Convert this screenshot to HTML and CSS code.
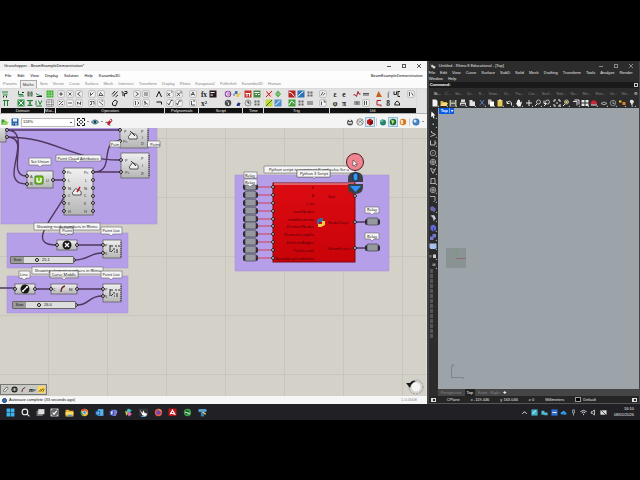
FILE: index.html
```html
<!DOCTYPE html>
<html lang="en">
<head>
<meta charset="utf-8">
<title>Grasshopper and Rhino desktop</title>
<link rel="stylesheet" href="styles.css">
</head>
<body>
<main class="desktop">
  <section class="gh">
    <header class="gh-title">
      <span>Grasshopper - BeamExampleDemonstration*</span>
      <div class="win-buttons">
        <button aria-label="Minimise"><svg viewBox="0 0 8 8"><path d="M2 4.5h4"/></svg></button>
        <button aria-label="Maximise"><svg viewBox="0 0 8 8"><rect x="2.5" y="2.5" width="3" height="3"/></svg></button>
        <button aria-label="Close"><svg viewBox="0 0 8 8"><path d="M2 2l4 4M6 2l-4 4"/></svg></button>
      </div>
    </header>
    <nav class="gh-menu">
      <button>File</button><button>Edit</button><button>View</button><button>Display</button><button>Solution</button><button>Help</button><button>Karamba3D</button>
      <span class="doc-name">BeamExampleDemonstration</span>
    </nav>
    <nav class="gh-tabs">
      <button>Params</button><button class="active">Maths</button><button>Sets</button><button>Vector</button><button>Curve</button><button>Surface</button><button>Mesh</button><button>Intersect</button><button>Transform</button><button>Display</button><button>Rhino</button><button>Kangaroo2</button><button>Pufferfish</button><button>Karamba3D</button><button>Human</button>
    </nav>
    <div class="ribbon" id="ribbon"></div>
    <div class="canvas-bar">
      <button aria-label="Open"><svg viewBox="0 0 16 16"><path fill="#3f9a2c" d="M1 3h5l2 2h4v3H5l-3 6H1z"/><path fill="#8ed45b" d="M5 8h10l-3 6H2z"/><path fill="#d9f0c8" d="M7 2h5v5H7z"/></svg></button>
      <button aria-label="Save"><svg viewBox="0 0 16 16"><path fill="#2a65ab" d="M1 1h14v14H1z"/><path fill="#e6eef8" d="M4 2h8v5H4z"/><path fill="#83b2e4" d="M4 10h8v5H4z"/><path fill="#173d70" d="M5 11h3v4H5z"/></svg></button>
      <select aria-label="Zoom level" class="zoom"><option>118%</option></select>
      <button aria-label="Zoom extents"><svg viewBox="0 0 16 16"><path fill="none" stroke="#111" stroke-width="2" d="M1 6V1h5M10 1h5v5M15 10v5h-5M6 15H1v-5"/><path d="M8 3l2 3H6zM8 13l2-3H6zM3 8l3-2v4zM13 8l-3-2v4z"/></svg></button>
      <i class="caret"></i>
      <button aria-label="Preview"><svg viewBox="0 0 16 16"><path fill="#e9f4f8" stroke="#33586c" stroke-width="2" d="M1 8q7-8 14 0q-7 8-14 0z"/><circle cx="8" cy="8" r="3.5" fill="#1f6d86"/><circle cx="8" cy="8" r="1.5"/></svg></button>
      <i class="caret"></i>
      <button aria-label="Sketch"><svg viewBox="0 0 16 16"><path d="M1 9q4-3 5 2t5 3" fill="none" stroke="#555" stroke-width="2"/><path fill="#bb1b22" d="M5 9l7-8 3 4-6 8-4 1z"/><path fill="#fff" d="M11 3l2 2-2 2-2-2z"/></svg></button>
      <span class="spacer"></span>
      <button aria-label="No preview"><svg viewBox="0 0 16 16"><circle cx="8" cy="9" r="6" fill="#555"/><path fill="#ddd" d="M4 8h8v3H4zM6 2h4v4H6z"/></svg></button>
      <button aria-label="Wireframe preview"><svg viewBox="0 0 16 16" fill="none" stroke="#666" stroke-width="1.4"><circle cx="8" cy="8" r="6.5"/><path d="M3 12L13 3M2 7q6-4 11 5"/></svg></button>
      <button aria-label="Shaded preview" class="pressed"><svg viewBox="0 0 16 16"><path fill="#c01818" d="M2 5l6-4 6 4v6l-6 4-6-4z"/><path fill="#760c0c" d="M8 8l6-3v6l-6 4z"/></svg></button>
      <i class="sep"></i>
      <button aria-label="Document preview"><svg viewBox="0 0 16 16"><circle cx="8" cy="9" r="6" fill="#23836e"/><path fill="#65b8a5" d="M2 5l5-3 2 5-5 2z"/></svg></button>
      <button aria-label="Selected preview" class="pressed"><svg viewBox="0 0 16 16"><circle cx="8" cy="8" r="6.5" fill="#246b29"/><path fill="#b4e389" d="M4 3l7 3-4 7z"/></svg></button>
      <button aria-label="Preview quality"><svg viewBox="0 0 16 16"><circle cx="8" cy="8" r="6.5" fill="#d77a24"/><path fill="#f9ddc0" d="M3 4h5v8H4z"/></svg></button>
      <i class="sep"></i>
      <button aria-label="Mesh settings"><svg viewBox="0 0 16 16"><circle cx="8" cy="8" r="6.5" fill="#4485cc" stroke="#285581"/><circle cx="6" cy="6" r="3" fill="#d6ebff"/></svg></button>
      <i class="caret"></i>
    </div>

    <div class="canvas">
      <svg class="graph" role="img" aria-label="Definition graph">
        <defs>
          <pattern id="grid" width="59" height="59" patternUnits="userSpaceOnUse" x="48" y="10"><path class="grid-line" d="M.5 0V59M0 .5H59"/></pattern>
          <linearGradient id="face" x2="0" y2="1"><stop stop-color="#f1f1f1"/><stop offset="1" stop-color="#b5b5b5"/></linearGradient>
          <linearGradient id="redface" x2="0" y2="1"><stop stop-color="#dc0b12"/><stop offset="1" stop-color="#c90308"/></linearGradient>
          <g id="relay"><rect x="-7" y="-3" width="15" height="6" rx="2" class="cap"/><rect x="-5" y="-4" width="11" height="7" rx="1" fill="#9697a0" stroke="#44454d" stroke-width=".7"/></g>
          <g id="cloud"><path d="M-4 3q-2-3 1-4q1-4 4-1q4 0 3 5z" fill="#eee" stroke="#333" stroke-width=".8"/></g>
          <g id="list" fill="none" stroke="#333" stroke-width="1"><path d="M-4-4v7M-4-3h3M1-3h2M-3 3l2-2M0 3h1M3 0v4M-1 0h2M5-4v2"/></g>
        </defs>
        <rect width="100%" height="100%" fill="#d4d1c9"/>
        <rect width="100%" height="100%" fill="url(#grid)"/>
        <g transform="translate(0 -128)">
          <g class="group"><path d="M1 128H157V224H1z"/><path d="M7 233H128V268H7z"/><path d="M7 276H128V313H7z"/><path d="M235 175H389V271H235z"/></g>

          <g class="wire">
            <path d="M7 130H120M7 137C55 137 70 160 120 160M7 130C32 130 5 176 26 176M7 137C35 137 -4 184 26 184"/>
            <path d="M54 180H64M94 172C116 172 98 141 120 141M94 172H120M64 197C56 214 25 245 56 245"/>
            <path d="M78 245H102M74 260C88 260 90 253 102 253"/>
            <path d="M0 288H14M36 289H50M78 289H102M77 305C90 305 88 296 102 296"/>
            <path d="M356 222H366M356 248H366"/>
          </g>
          <path class="wire-red" d="M257 187H272M257 195H272M257 203H272M257 211H272M257 219H272M257 226H272M257 234H272M257 242H272M257 250H272M257 258H272"/>

          <g class="node">
            <rect x="-4" y="120" width="10" height="22"/>
            <rect x="120" y="120" width="28" height="28"/>
            <rect x="121" y="153" width="28" height="25"/>
            <rect x="27" y="171" width="26" height="17"/>
            <rect x="64" y="168" width="29" height="47"/>
            <rect x="57" y="240" width="20" height="10"/>
            <rect x="103" y="240" width="18" height="18"/>
            <rect x="15" y="284" width="20" height="10"/>
            <rect x="51" y="284" width="26" height="10"/>
            <rect x="103" y="284" width="18" height="18"/>
          </g>
          <g class="jag"><path d="M148 130V147M149 155V177M121 242V257M121 286V301"/></g>
          <rect x="273" y="183" width="82" height="79" fill="url(#redface)" stroke="#7e0a10"/>
          <path d="M274 184H354" stroke="#f2b7b7"/>

          <g class="port">
            <circle cx="7" cy="130" r="1.4"/><circle cx="7" cy="137" r="1.4"/>
            <circle cx="120" cy="130" r="1.4"/><circle cx="120" cy="141" r="1.4"/><circle cx="121" cy="160" r="1.4"/><circle cx="121" cy="172" r="1.4"/>
            <circle cx="27" cy="176" r="1.4"/><circle cx="27" cy="184" r="1.4"/><circle cx="53" cy="180" r="1.4"/>
            <circle cx="64" cy="172" r="1.4"/><circle cx="64" cy="180" r="1.4"/><circle cx="64" cy="188" r="1.4"/><circle cx="64" cy="196" r="1.4"/><circle cx="64" cy="203" r="1.4"/><circle cx="64" cy="211" r="1.4"/>
            <circle cx="93" cy="172" r="1.4"/><circle cx="93" cy="180" r="1.4"/><circle cx="93" cy="188" r="1.4"/><circle cx="93" cy="196" r="1.4"/><circle cx="93" cy="203" r="1.4"/><circle cx="93" cy="211" r="1.4"/>
            <circle cx="57" cy="245" r="1.4"/><circle cx="77" cy="245" r="1.4"/><circle cx="103" cy="245" r="1.4"/><circle cx="103" cy="253" r="1.4"/>
            <circle cx="15" cy="289" r="1.4"/><circle cx="35" cy="289" r="1.4"/><circle cx="51" cy="289" r="1.4"/><circle cx="77" cy="289" r="1.4"/><circle cx="103" cy="289" r="1.4"/><circle cx="103" cy="296" r="1.4"/>
            <circle cx="74" cy="260" r="1.4"/><circle cx="76" cy="305" r="1.4"/>
            <circle cx="273" cy="187" r="1.4"/><circle cx="273" cy="195" r="1.4"/><circle cx="273" cy="203" r="1.4"/><circle cx="273" cy="211" r="1.4"/><circle cx="273" cy="219" r="1.4"/><circle cx="273" cy="226" r="1.4"/><circle cx="273" cy="234" r="1.4"/><circle cx="273" cy="242" r="1.4"/><circle cx="273" cy="250" r="1.4"/><circle cx="273" cy="258" r="1.4"/>
            <circle cx="355" cy="196" r="1.4"/><circle cx="355" cy="222" r="1.4"/><circle cx="355" cy="248" r="1.4"/>
          </g>
          <use href="#relay" x="250" y="187"/><use href="#relay" x="250" y="195"/><use href="#relay" x="250" y="203"/><use href="#relay" x="250" y="211"/><use href="#relay" x="250" y="219"/><use href="#relay" x="250" y="226"/><use href="#relay" x="250" y="234"/><use href="#relay" x="250" y="242"/><use href="#relay" x="250" y="250"/><use href="#relay" x="250" y="258"/>
          <use href="#relay" x="372" y="222"/><use href="#relay" x="372" y="248"/>

          <use href="#cloud" x="133" y="136"/><use href="#cloud" x="134" y="166"/>
          <path d="M130 131l5 5M131 161l5 5" stroke="#333"/>
          <use href="#cloud" x="77" y="192"/><path d="M77 192l3-5" stroke="#b71e28" stroke-width="1.5"/>
          <rect x="35" y="176" width="8" height="8" rx="1" fill="#7ccb25" stroke="#3c7a10"/><path d="M37 178v2q0 2 2 2t2-2v-2" fill="none" stroke="#fff" stroke-width="1.4"/>
          <circle cx="67" cy="245" r="4.5" fill="#171717"/><path d="M65 243l4 4M69 243l-4 4" stroke="#fff" stroke-width="1.3"/>
          <circle cx="25" cy="289" r="4.5" fill="#171717"/><path d="M23 291l4-4" stroke="#fff" stroke-width="1.3"/><circle cx="23" cy="291" r="1" fill="#fff"/><circle cx="27" cy="287" r="1" fill="#fff"/>
          <path d="M61 292q0-5 4-6" fill="none" stroke="#6d1d33" stroke-width="1.3"/>
          <use href="#list" x="114" y="249"/><use href="#list" x="114" y="293"/>

          <g class="io">
            <text x="124" y="133">P</text><text x="123" y="143">Pc</text><text x="141" y="133">P</text><text x="142" y="139">I</text><text x="141" y="145">D</text>
            <text x="125" y="162">P</text><text x="125" y="174">Pc</text><text x="141" y="160">P</text><text x="142" y="167">I</text><text x="141" y="175">D</text>
            <text x="30" y="178">A</text><text x="30" y="185">B</text><text x="46" y="182">U</text>
            <text x="67" y="174">Pc</text><text x="68" y="182">L</text><text x="68" y="190">N</text><text x="68" y="197">C</text><text x="68" y="205">E</text><text x="68" y="213">H</text>
            <text x="84" y="174">Pc</text><text x="85" y="182">L</text><text x="84" y="190">N</text><text x="84" y="197">C</text><text x="84" y="205">E</text><text x="84" y="213">H</text>
            <text x="105" y="247">P</text><text x="105" y="255">S</text><text x="105" y="291">P</text><text x="105" y="298">S</text>
            <text x="53" y="291">C</text><text x="69" y="291">M</text>
          </g>
          <g class="io red end">
            <text x="314" y="189">E</text><text x="314" y="197">A</text><text x="314" y="205">I_xx</text><text x="314" y="213">numNodes</text><text x="314" y="221">numElements</text><text x="314" y="228">ElementNodes</text><text x="314" y="236">ElementLengths</text><text x="314" y="244">ElementAngles</text><text x="314" y="252">PointLoads</text><text x="314" y="260">BoundaryConditions</text>
          </g>
          <g class="io red"><text x="328" y="198">Out</text><text x="328" y="224">NodeDisps</text><text x="328" y="250">BeamForces</text></g>
          <path fill="#2e6ca8" d="M320 218h3v4h-4v2h-2v-4z"/><path fill="#f4cd45" d="M321 227h-3v-3h4v-3h3v4z"/>

          <g class="tag">
            <path d="M120 141H110V147H120M148 141H160V147H148"/><path d="M29 158H51V165H42L40 167L38 165H29z"/><path d="M56 155H101V161H80L78 163L76 161H56z"/>
            <path d="M34 223H100V230H34z"/><path d="M60 227H73V234H68L66 236L64 234H60z"/><path d="M101 227H122V234H113L111 236L109 234H101z"/>
            <path d="M32 267H103V274H32z"/><path d="M19 271H30V278H26L24 280L22 278H19z"/><path d="M50 271H78V278H66L64 280L62 278H50z"/><path d="M101 271H122V278H113L111 280L109 278H101z"/>
            <path d="M264 166H355V173H264z"/><path d="M297 170H330V177H316L314 179L312 177H297z"/>
            <path d="M244 172H257V178H244z"/><path d="M244 179H257V185H252L250 187L248 185H244z"/>
            <path d="M365 207H379V213H374L372 215L370 213H365z"/><path d="M365 233H379V239H374L372 241L370 239H365z"/>
          </g>
          <g class="caption">
            <text x="115" y="146">Poin</text><text x="155" y="146">Point</text><text x="40" y="163">Set Union</text><text x="78" y="160">Point Cloud Attributes</text>
            <text x="67" y="228">Showing node numbers in Rhino</text><text x="68" y="272">Showing element numbers in Rhino</text>
            <text x="309" y="171">Python script to construct K and solve for u</text>
          </g>
          <g class="tag"><path d="M60 228H73V234H60z"/><path d="M50 271H78V277H50z"/><path d="M297 170H330V177H297z"/></g>
          <g class="caption">
            <text x="67" y="232">Point</text><text x="111" y="232">Point List</text><text x="24" y="276">Line</text><text x="64" y="276">Curve Middle</text><text x="111" y="276">Point List</text>
            <text x="314" y="175">Python 3 Script</text><text x="250" y="177">Relay</text><text x="250" y="184">Relay</text><text x="372" y="211">Relay</text><text x="372" y="238">Relay</text>
          </g>

          <circle cx="355" cy="162" r="8.5" fill="#ef8590" stroke="#4b1d24"/>
          <path d="M353 160v6l1.5-1 1 2 1-1-1-2h2z" fill="#fff" stroke="#222" stroke-width=".5"/>
          <path d="M348 182V179Q348 172 355.5 172T363 179V182z" fill="#3c4148"/><path d="M348 184H363V187Q363 194 355.5 194T348 187z" fill="#3c4148"/>
          <rect x="353" y="173" width="5" height="8" rx="2" fill="#3096fa" stroke="#16283b"/><path d="M350 186H361L355.5 192z" fill="#2b93fb"/>
        </g>
      </svg>
      <svg class="compass" viewBox="0 0 22 18" aria-hidden="true"><circle cx="13" cy="10" r="7" fill="#d3d3cf" stroke="#999" stroke-dasharray="2 1"/><circle cx="13" cy="10" r="4.5" fill="#f4f4f2"/><path d="M3 6l4 5 1-3q2-3 5-4q-4-1-6 2z" fill="#181818"/></svg>
      <label class="slider first"><span>Size</span><input type="range" min="0" max="100" value="75"><output>25.1</output></label>
      <label class="slider second"><span>Size</span><input type="range" min="0" max="100" value="79"><output>26.0</output></label>
      <div class="markov">
        <button aria-label="Panel"><svg viewBox="0 0 16 16"><path d="M3 11L11 2l3 3-8 9z" fill="#fff" stroke="#333" stroke-width="1.5"/></svg></button>
        <button aria-label="Integer"><svg viewBox="0 0 16 16"><circle cx="8" cy="8" r="7" fill="#181818"/><path d="M5 5v6M8 4v8M11 5v6" stroke="#fff" stroke-width="1.5"/></svg></button>
        <button aria-label="Line"><svg viewBox="0 0 16 16"><path d="M4 14q0-8 8-11" fill="none" stroke="#5c1726" stroke-width="2"/></svg></button>
        <button aria-label="Area"><svg viewBox="0 0 16 16"><text x="0" y="13" font-size="12" font-weight="bold" font-style="italic">m²</text></svg></button>
        <button aria-label="Series" class="lit"><svg viewBox="0 0 16 16"><path d="M2 13l5-6M6 13l6-8M11 13l3-6" stroke="#6b5200" stroke-width="2"/></svg></button>
      </div>
    </div>
    <footer class="gh-status"><i class="info"></i><span>Autosave complete (33 seconds ago)</span><span class="version">1.0.0008</span></footer>
  </section>

  <section class="rhino">
    <header class="rh-title">
      <svg class="logo" viewBox="0 0 16 16"><path fill="#ddd" d="M1 2l4 5 2-3 3 4 5 1-2 5-4 1-1-3-4-1z"/></svg>
      <span>Untitled - Rhino 8 Educational - [Top]</span>
      <div class="win-buttons">
        <button aria-label="Minimise"><svg viewBox="0 0 8 8"><path d="M2 4.5h4"/></svg></button>
        <button aria-label="Maximise"><svg viewBox="0 0 8 8"><rect x="2.5" y="2.5" width="3" height="3"/></svg></button>
        <button aria-label="Close"><svg viewBox="0 0 8 8"><path d="M2 2l4 4M6 2l-4 4"/></svg></button>
      </div>
    </header>
    <nav class="rh-menu">
      <button>File</button><button>Edit</button><button>View</button><button>Curve</button><button>Surface</button><button>SubD</button><button>Solid</button><button>Mesh</button><button>Drafting</button><button>Transform</button><button>Tools</button><button>Analyze</button><button>Render</button><button>Window</button><button>Help</button>
    </nav>
    <label class="command"><span>Command:</span><input type="text"><i class="page"></i></label>
    <nav class="rh-tabs">
      <button class="active">St...</button><button>C...</button><button>Se...</button><button>Di...</button><button>S...</button><button>View...</button><button>Vi...</button><button>Tra...</button><button>Cur...</button><button>Surf...</button><button>Soli...</button><button>Su...</button><button>Me...</button><button>Ren...</button><button>Dr...</button><button>Ne...</button><button class="active" aria-label="Options">⚙</button>
    </nav>
    <div class="rh-tools" id="rhTools"></div>
    <div class="rh-body">
      <div class="rh-side"><div class="side-tools" id="sideTools"></div><div class="swatches" id="swatches"></div></div>
      <div class="view-col">
        <div class="viewport">
          <button class="view-name">Top <span>▾</span></button>
          <svg class="plane" viewBox="0 0 20 20" aria-hidden="true"><rect width="20" height="20" fill="#8a9394"/><path d="M10.5 0V10" stroke="#789a80"/><path d="M10 10.5H20" stroke="#946b70"/></svg>
          <svg class="axes" viewBox="0 0 18 18" aria-hidden="true"><path d="M3.5 4V15.5H14" fill="none" stroke="#7d848b"/><text x="4" y="4">y</text><text x="14" y="17">x</text></svg>
        </div>
        <nav class="view-tabs"><button>Perspective</button><button class="active">Top</button><button>Front</button><button>Right</button><button class="plus" aria-label="Add view">✚</button></nav>
      </div>
    </div>
    <footer class="rh-status"><i class="pane"></i><span>CPlane</span><span>x -119.446</span><span>y 163.046</span><span>z 0</span><span>Millimeters</span><span class="layer"><i></i>Default</span><i class="pane"></i></footer>
  </section>
</main>
<footer class="taskbar">
  <nav class="apps" id="apps"></nav>
  <div class="tray">
    <div class="tray-icons" id="tray"></div>
    <time>16:10<br>08/01/2026</time>
  </div>
</footer>
<script src="script.js"></script>
</body>
</html>
```
FILE: styles.css
```css
* { box-sizing: border-box; }
html, body { height: 100%; }
body {
  margin: 0;
  padding: 61px 0 60px;
  background: #000;
  display: flex;
  flex-direction: column;
  font: 4px/6px "Liberation Sans", Arial, sans-serif;
  color: #111;
  overflow: hidden;
}
button, input, select {
  margin: 0;
  padding: 0;
  border: 0;
  background: none;
  font: inherit;
  color: inherit;
  min-width: 0;
}
button { display: block; white-space: nowrap; }
svg { display: block; }

.desktop {
  flex: 1;
  min-height: 0;
  display: grid;
  grid-template-columns: 2fr 1fr;
}
.win-buttons { margin-left: auto; display: flex; gap: 7px; padding-right: 4px; }
.win-buttons svg { width: 8px; height: 8px; fill: none; stroke: currentColor; stroke-width: 1; }

/* Grasshopper */
.gh {
  display: flex;
  flex-direction: column;
  min-width: 0;
  min-height: 0;
  background: #f3f3f3;
}
.gh-title { height: 10px; display: flex; align-items: center; padding-left: 4px; }
.gh-title .win-buttons { color: #555; }
.gh-menu { height: 9px; display: flex; align-items: center; gap: 6px; padding: 0 4px 0 5px; background: #fdfdfd; }
.doc-name { margin-left: auto; }
.gh-tabs { height: 8px; display: flex; gap: 1px; align-items: stretch; padding-left: 1px; color: #858585; background: #fbfbfb; }
.gh-tabs button { padding: 0 2px; }
.gh-tabs .active { color: #333; border: 1px solid #aaa; border-bottom: 0; background: #eee; }
.ribbon {
  height: 26px;
  display: grid;
  grid-template-columns: 43fr 10fr 108fr 33fr 43fr 20fr 64fr 86fr 9fr;
  gap: 1px;
  padding: 1px;
  background: #dadada;
  border-bottom: 1px solid #b3b3b3;
}
.panel { display: flex; flex-direction: column; min-width: 0; }
.panel-icons { flex: 1; display: flex; justify-content: space-between; padding: 1px; background: #e2e2e2; }
.cluster { display: grid; grid-template-rows: 8px 8px; grid-auto-flow: column; gap: 1px; }
.panel-icons svg { width: 8px; height: 8px; }
.panel-name { height: 5px; background: #111; color: #eee; line-height: 5px; text-align: center; overflow: hidden; }
.canvas-bar {
  height: 14px;
  padding: 3px 3px 1px 1px;
  display: flex;
  align-items: center;
  gap: 2px;
  background: #f4f4f4;
}
.canvas-bar svg { width: 8px; height: 8px; }
.zoom {
  width: 54px;
  height: 9px;
  border: 1px solid #bbb;
  padding-left: 1px;
  appearance: none;
  background: #fff linear-gradient(#555, #555) no-repeat right 2px center / 2px 1px;
}
.caret { border: 1px solid transparent; border-top-color: #333; }
.spacer { flex: 1; }
.sep { width: 1px; height: 8px; background: #ccc; }
.pressed { outline: 1px solid #92bddd; background: #d5e7f5; }

.canvas { flex: 1; min-height: 0; position: relative; overflow: hidden; }
.graph { width: 100%; height: 100%; }
.grid-line { fill: none; stroke: #c8c5bd; }
.group { fill: #b59fe8; stroke: #a591d7; stroke-width: .5; }
.wire { fill: none; stroke: #51375f; stroke-width: 1.4; }
.wire-red { fill: none; stroke: #d73a56; stroke-width: 1; }
.node rect { fill: url(#face); stroke: #555; stroke-width: .7; }
.jag { stroke: #333; stroke-width: 1; stroke-dasharray: 1 1; }
.port { fill: #fff; stroke: #111; stroke-width: 1; }
.cap { fill: #25262c; }
.io, .caption { font-family: "Open Sans", "Noto Sans", sans-serif; font-size: 4px; fill: #222; }
.red { fill: #400206; }
.end { text-anchor: end; }
.tag { fill: #f6f6f6; stroke: #666; stroke-width: .6; }
.caption { text-anchor: middle; fill: #000; }
.compass { position: absolute; right: 2px; bottom: 1px; width: 22px; height: 18px; }
.slider {
  position: absolute;
  left: 10px;
  top: 128px;
  width: 64px;
  height: 8px;
  display: flex;
  align-items: center;
  border: 1px solid #666;
  border-radius: 1px;
  background: #dedede;
}
.slider.second { left: 12px; top: 173px; }
.slider span { width: 13px; text-align: center; background: #9b9b9b; }
.slider input { width: 18px; height: 6px; appearance: none; }
.slider input::-webkit-slider-thumb { appearance: none; width: 4px; height: 4px; border: 1px solid #111; border-radius: 50%; background: #fff; }
.markov { position: absolute; left: 0; bottom: 1px; display: flex; gap: 2px; padding: 1px; background: #c9c9c4; border: 1px solid #777; }
.markov svg { width: 7px; height: 7px; }
.lit { background: #ffd75b; }
.gh-status { height: 8px; display: flex; align-items: center; gap: 2px; padding: 0 10px 0 2px; background: #f6f6f6; }
.info { width: 5px; height: 5px; border-radius: 50%; background: #2878b8; border: 1px solid #14426b; }
.version { margin-left: auto; color: #888; }

/* Rhino */
.rhino {
  display: flex;
  flex-direction: column;
  min-width: 0;
  min-height: 0;
  background: #2c2c2c;
  color: #e4e4e4;
  border: solid #444;
  border-width: 0 1px 0 2px;
}
.rh-title { height: 9px; display: flex; align-items: center; gap: 3px; padding-left: 1px; }
.rh-title .win-buttons { color: #888; }
.logo { width: 6px; height: 6px; }
.rh-menu { display: flex; flex-wrap: wrap; column-gap: 5px; }
.command { height: 6px; display: flex; align-items: center; padding: 0 1px; background: #1a1a1a; color: #fff; font-weight: bold; }
.command input { flex: 1; height: 6px; outline: 0; }
.page { width: 4px; height: 4px; border: 1px solid #ccc; }
.rh-tabs { height: 9px; display: flex; justify-content: space-between; align-items: center; padding: 2px 1px 0 5px; color: #858585; }
.rh-tabs .active { color: #e6e6e6; }
.rh-tools { height: 11px; display: flex; justify-content: space-between; align-items: center; padding: 0 3px 0 2px; }
.rh-tools svg { width: 8px; height: 8px; }
.rh-body { flex: 1; min-height: 0; display: flex; }
.rh-side { width: 9px; padding-top: 3px; }
.side-tools { height: 158px; display: flex; flex-direction: column; justify-content: space-between; }
.side-tools svg { width: 8px; height: 8px; }
.swatches { display: grid; grid-template-columns: 3px; gap: 1px; padding: 0 1px; }
.swatches i { height: 4px; background: #555; }
.view-col { flex: 1; display: flex; flex-direction: column; min-width: 0; }
.viewport { flex: 1; position: relative; background: #9ca3a9; }
.view-name { background: #0a5ce6; color: #fff; margin-left: 1px; padding: 0 1px 0 2px; font-weight: bold; }
.view-name span { border-left: 1px solid #7aa9f5; padding-left: 1px; }
.plane { position: absolute; left: 8px; top: 140px; width: 20px; height: 20px; }
.axes { position: absolute; left: 10px; bottom: 9px; width: 18px; height: 18px; font-size: 4px; fill: #61676d; }
.view-tabs { height: 7px; display: flex; align-items: stretch; gap: 3px; padding-left: 3px; background: #454545; color: #858585; }
.view-tabs .active { background: #222; color: #fff; padding: 0 2px; }
.view-tabs .plus { color: #fff; }
.rh-status { height: 8px; display: flex; align-items: center; justify-content: space-between; padding: 0 2px; background: #252525; border-bottom: 1px solid #555; }
.pane { width: 5px; height: 4px; border: 1px solid #ddd; border-left-width: 2px; }
.layer { display: flex; align-items: center; gap: 2px; margin-right: 25px; }
.layer i { width: 6px; height: 5px; border: 1px solid #999; background: #000; }

/* Taskbar */
.taskbar { height: 16px; display: flex; align-items: center; justify-content: space-between; padding: 0 6px; background: #202025; color: #eee; }
.apps { width: 32%; display: flex; justify-content: space-between; }
.apps svg { width: 9px; height: 9px; }
.tray { width: 18%; display: flex; justify-content: space-between; }
.tray-icons { width: 76%; display: flex; justify-content: space-between; align-items: center; }
.tray-icons svg { width: 7px; height: 7px; }
.tray time { text-align: right; }
```
FILE: script.js
```js
const box = s => `<rect x="1.5" y="1.5" width="13" height="13" rx="2" fill="#f6f6f6" stroke="#888"/><g stroke="#222" stroke-width="1.5" fill="none">${s}</g>`;
const tile = (c, s) => `<rect x="1" y="1" width="14" height="14" fill="${c}"/><g stroke="#fff" stroke-width="2" fill="none">${s}</g>`;
const line = (d, c = '#222') => `<path d="${d}" fill="none" stroke="${c}" stroke-width="2"/>`;
const fill = (d, c = '#222') => `<path d="${d}" fill="${c}"/>`;
const ball = (c, s = '') => `<circle cx="8" cy="8" r="6.5" fill="${c}"/>${s}`;
const glyph = t => `<text x="8" y="13" font-size="15" font-family="Liberation Serif" font-weight="bold" text-anchor="middle" fill="#222">${t}</text>`;
const p = d => `<path d="${d}"/>`;

function buttons(list, name) {
  return list.map((s, i) => `<button aria-label="${name} ${i + 1}"><svg viewBox="0 0 16 16">${s}</svg></button>`).join('');
}

const bars = line('M2 2v5M6 2v5M10 2v5M2 10h9', '#23803a') + line('M3 12v3M9 12v3');
const small = fill('M3 3h4v4H3zM9 3h4v4H9zM3 9h4v4H3zM9 9h4v4H9z', '#666');
const python = fill('M4 2h5v6H3v4H1V7h3z', '#3574aa') + fill('M12 14H7V8h6V4h2v6h-3z', '#efc33d');

const panels = [
  ['Domain', [
    [bars, line('M2 3h12M5 3v11M11 3v11', '#23803a')],
    [line('M3 2v7h9M3 12h11', '#23803a') + line('M10 5h4'), tile('#2f9346', p('M3 3l10 10M13 3L3 13')), small + line('M2 8h12', '#23803a'), line('M2 3h12M3 13h10M5 3l6 10M11 3L5 13', '#23803a'), line('M2 7l5 3 7 2', '#23803a') + line('M3 13h11'), line('M2 3v9M7 3l3 8 4-8M2 14h12', '#23803a')]
  ]],
  ['Mat...', [[fill('M1 1h14v14H1z', '#43ae38') + `<path d="M1 6h14M1 11h14M6 1v14M11 1v14" stroke="#b6e9a8"/>`, `<path d="M1.5 1.5h13v13h-13zM1 6h14M1 11h14M6 1v14M11 1v14" fill="#fff" stroke="#555"/>`]]],
  ['Operators', [
    [box(p('M4 8h8M8 4v8')), box(p('M4 12l8-8M4 5h3M9 11h3')), box(p('M5 5l6 6M11 5l-6 6')), box(p('M4 8h8')), box(p('M11 4L5 8l6 4')), box(p('M5 11V6l6 5V5'))],
    [box(p('M5 11l6-6M5 5v6')), box(p('M4 5h3v6H4M9 5h3v6')), box(p('M4 11l3-6 5 6z')), box(p('M4 5l8 7M9 4h3'))],
    [line('M2 9l6-7M4 13l9-10M9 14l5-4'), line('M3 7l5-5 5 3-4 9-6-2z'), line('M3 4h3v8M9 3h5v4H9v6')],
    [box(p('M5 4l6 4-6 4')), box(p('M5 4v8M9 5l3 3-3 3')), box(p('M4 6h8M4 10h8')), box(p('M4 5l8 6M6 12V4'))],
    [line('M3 14L8 3l5 11', '#111'), line('M3 6h10v5', '#111')]
  ]],
  ['Polynomials', [
    [box(p('M3 6l5 6M8 6l-5 6M10 4h3')), box(p('M3 8l3 4 4-9h3')), box(p('M4 5l6 7M10 5l-6 7M12 3v4')), box(p('M3 8l2 4 3-8h5'))],
    [box(p('M4 11l4-7 3 7M5 9h5')), box(p('M5 4v8h7M8 4h4'))]
  ]],
  ['Script', [
    [glyph('fx'), glyph('x²'), tile('#25151d', p('M3 5h8M3 10h5'))],
    [ball('#8d3b9d', line('M5 8h7M11 5a4 4 0 1 0 0 6', '#fff')), ball('#474d50', line('M5 4q6 3 4 8', '#ddd')), python, fill('M2 2l5 10 3-5 5 1-2 6H8z', '#24347e')]
  ]],
  ['Time', [[tile('#c83328', p('M3 7h10M6 7v6M11 8v5')), ball('#ddd', `<circle cx="8" cy="8" r="6" fill="none" stroke="#444"/>` + line('M8 4v4h3')), tile('#4a8b42', p('M3 5h10M5 9h3M10 9h3')), small]]],
  ['Trig', [
    [tile('#f4d4d0', '') + line('M2 14L14 2M3 3l8 10', '#b51f20'), tile('#c5d83c', '') + line('M2 14L14 2', '#277130'), fill('M8 1l6 7-6 7-6-7z', '#57a94c') + line('M5 8h6', '#bde5aa'), tile('#5290cb', p('M3 12l9-9'))],
    [tile('#b42424', p('M2 4l5 2 6 7')), tile('#43a13a', p('M2 12l5-8 6 5')), tile('#2c71b8', p('M2 13l5-6 6-4')), small, small, line('M2 6h12M2 10h12', '#555')],
    [box(p('M4 11l4-7M8 11l4-5')), box(p('M5 5v7M9 4h3v4'))]
  ]],
  ['Util', [
    [glyph('ε'), glyph('φ'), glyph('e'), glyph('π')],
    [line('M1 10l3-1 3 4 3-10 2 5h3', '#a31c25'), line('M2 6h12M2 10h12M8 5v6', '#555'), line('M2 7h12M2 10h12', '#555'), box(p('M5 4v8M9 4v8'))],
    [fill('M2 14L7 2l7 12z', '#c76119'), line('M12 3H4v9h8v3', '#a91f2a'), glyph('∫'), glyph('8'), line('M2 3v6h5V3M9 3h5M10 3v10h4'), line('M3 12h11M4 12V8l4-4 5 4v4')],
    [box(p('M5 4v8M9 5l3 6'))]
  ]],
  ['', []]
];
document.getElementById('ribbon').innerHTML = panels.map(([name, groups]) =>
  `<section class="panel"><div class="panel-icons">${groups.map(g => `<div class="cluster">${buttons(g, name)}</div>`).join('')}</div>${name ? `<div class="panel-name">${name}</div>` : ''}</section>`).join('');

const W = '#e2e2e2';
const lens = line('M2 14l4-4', W) + `<circle cx="9" cy="6" r="4" fill="none" stroke="${W}" stroke-width="1.5"/>`;
document.getElementById('rhTools').innerHTML = buttons([
  fill('M3 1h7l3 3v11H3z', '#f2f2f2'),
  fill('M1 4h5l1 2h7v8H1z', '#d8b643') + fill('M4 8h12l-3 6H1z', '#f5db7c'),
  fill('M1 2h14v13H1z', '#b5b79b') + fill('M4 2h8v5H4zM4 10h8v5H4z', '#4e5355'),
  fill('M4 1h8v5H4zM2 7h12v6H2z', '#d5d5d5') + line('M4 11h8', '#444'),
  fill('M3 2h6v12H3zM9 5h5v9H9z', W),
  line('M4 2l7 9M12 2L5 11', '#5b82c4') + line('M3 12h2M11 12h2', '#5b82c4'),
  fill('M2 1h7v10H2z', '#bbb') + fill('M6 5h8v10H6z', '#fff'),
  fill('M3 2h10v13H3z', '#e4c957') + fill('M6 1h4v3H6z', '#eee'),
  line('M2 8q5-7 9 0v5M2 4v5h5', W),
  fill('M4 7V3h2v4V1h2v6V2h2v6l2-3 2 1-3 9H6L2 9z', '#f0f0f0'),
  line('M8 2v12M2 8h12', W), lens, lens + line('M2 3v6h4', W),
  line('M2 6V2h4M10 2h4v4M14 10v4h-4M6 14H2v-4', W) + line('M6 8h4', W),
  lens + fill('M7 4h4v4H7z', '#e4d548'), line('M2 5h8v8M5 2h9v9', W),
  fill('M1 2h6v5H1zM9 2h6v5H9zM1 9h6v5H1zM9 9h6v5H9z', '#e7e7e7'),
  fill('M2 7l2-4h7l3 4v4H1z', '#c72633') + line('M2 12h12', W),
  line('M2 9q6-6 12 0q-6 5-12 0', '#aaa'), `<circle cx="8" cy="8" r="5.5" fill="none" stroke="${W}"/>` + line('M8 5v4h3', '#aaa'),
  fill('M2 3h5v4H2z', '#f1bd2d') + fill('M9 6h6v6H9z', '#e2802c'),
  fill('M5 2q6-2 7 4l-3 4v2H7l-1-3q-4-4-1-7zM7 13h3v2H7z', W)
].map(s => s + fill('M16 13v3h-3z', '#ccc')), 'Tool');

const ring = `<circle cx="8" cy="8" r="5.5" fill="none" stroke="#bbb" stroke-width="1.5"/>`;
document.getElementById('sideTools').innerHTML = buttons([
  fill('M5 1l8 8H9l2 5-2 1-2-5-3 2z', '#fff'), fill('M7 7h3v3H7z', '#8eb7af'),
  line('M3 13L13 9 5 5V2', '#bbb'), line('M3 3v9h9V3M12 8h3', '#bbb'), ring + fill('M7 7h2v2H7z', '#ccc'), ring + line('M8 3v10M3 8h10', '#aaa'),
  line('M3 3q3-2 5 2t5-2L8 13z', '#aaa'), line('M4 3h8v10H4zM2 13h12', '#aaa'), ring + line('M6 6h4v4H6z', '#aaa'), line('M2 3h10v8l-3 3', '#aaa'),
  fill('M2 5l5-3 7 6-3 6-8-3z', '#6965ad'), fill('M3 3l7-1 4 7-5 5-1-6z', '#c6c7d7'), fill('M3 4l6-3 5 4v7l-6 3-5-4z', '#6068d7') + line('M9 8v6', '#343a91'),
  fill('M7 2h7v7H7zM2 7h7v7H2z', '#7176cf'), fill('M1 3h14v9l-3 2H3l-2-3z', '#a7c2ef'), fill('M1 6h4v5H1z', '#777') + fill('M8 5h6v7H8z', '#ccc'), fill('M7 5h6v5H7z', '#888')
].map(s => s + fill('M16 13v3h-3z', '#bbb')), 'Draw');
document.getElementById('swatches').innerHTML = '<i></i>'.repeat(14);

document.getElementById('apps').innerHTML = buttons([
  fill('M1 1h6.5v6.5H1zM8.500 1H15v6.5H8.500zM1 8.500h6.500V15H1zM8.500 8.500H15V15H8.500z', '#39b4ed'),
  `<circle cx="7" cy="7" r="5" fill="none" stroke="#eee" stroke-width="2"/>` + line('M11 11l4 4', '#eee'),
  fill('M1 5h11v9H1z', '#777') + fill('M4 2h11v9H4z', '#ddd'),
  fill('M1 1h14v14H1z', '#ddd') + ball('#666', line('M5 8l2 3 5-6', '#fff')),
  fill('M1 3h6l1 2h7v10H1z', '#e9ad31') + fill('M1 7h14v5H1z', '#ffd968') + fill('M5 12h7v3H5z', '#4a94d0'),
  ball('#e6bd2b') + fill('M2 4q6-6 12 2H8z', '#d93a31') + fill('M2 5l5 9q-8-2-5-9z', '#38a354') + `<circle cx="8" cy="8" r="3" fill="#4286e8" stroke="#fff"/>`,
  fill('M5 2h10v12H5z', '#52b2e9') + fill('M1 5h8v8H1z', '#1169b7') + `<circle cx="5" cy="9" r="2" fill="none" stroke="#fff"/>`,
  fill('M4 3h9l2 4-3 7H6z', '#7681d8') + fill('M1 5h8v8H1z', '#444db0') + line('M3 7h4M5 7v5', '#fff'),
  fill('M7 1l7 3-5 5-5-3z', '#43c4c0') + fill('M10 6l4 5-5 4-4-5z', '#d764b0') + fill('M2 5l5 3-3 6z', '#c8d449'),
  fill('M0 1h16v13H0z', '#34353b') + fill('M1 2l5 7 2-5 2 5 5 1-3 5-6-2z', '#fff') + fill('M4 14h8v2H4z', '#55a9df'),
  ball('#e25c46') + `<circle cx="8" cy="8" r="4" fill="#7542b8"/>` + fill('M8 1l6 5-4-1z', '#f3b94a'),
  fill('M1 1h14v13H1z', '#c3151b') + line('M4 11l4-7 4 7-8-2', '#fff'),
  ball('#36a145') + fill('M5 3l7 4-7 5z', '#1e3f29') + line('M4 7l8 3', '#c6e4cc'),
  fill('M1 2h14v5H1z', '#5aa5da') + fill('M5 6h6v9H5z', '#347db6') + line('M8 7l6 4', '#f4d44c')
], 'App');

document.getElementById('tray').innerHTML = buttons([
  line('M3 11l5-5 5 5', '#fff'), tile('#3eb4ce', p('M3 11l8-7')), fill('M1 4h7v9H1zM8 8h7v6H8z', '#55bad2'), tile('#2b71d8', p('M3 8h10')),
  fill('M2 12q-2-5 3-5q3-6 7 0q5 2 2 6z', '#2d9bea'), line('M6 2h4v7H6zM8 9v6', '#9aa8b4'),
  line('M1 6q7-6 14 0M4 9q4-4 8 0M8 11v3', '#ddd'), line('M3 6h3l4-4v12l-4-4H3z', '#ddd'), fill('M1 3h14v10H1z', '#ddd') + line('M3 3l11 11', '#333')
], 'Tray');
```
